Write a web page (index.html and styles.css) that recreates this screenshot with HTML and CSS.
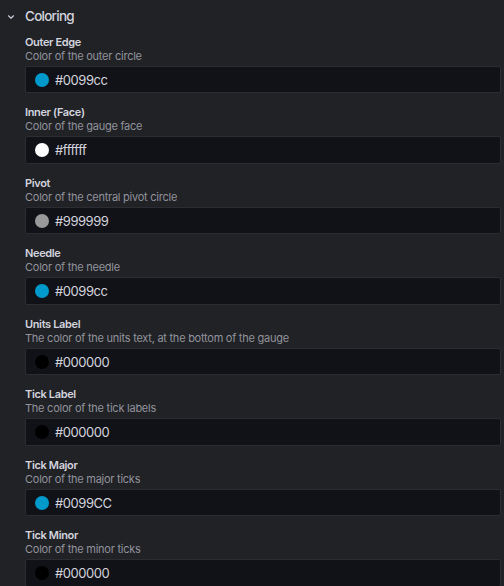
FILE: index.html
```html
<!DOCTYPE html>
<html>
<head>
<meta charset="utf-8">
<link rel="stylesheet" href="styles.css">
</head>
<body>
<div class="section">
  <div class="section-header">
    <svg class="chevron" width="10" height="10" viewBox="0 0 10 10"><path d="M2.5 3.8 L5 6.2 L7.5 3.8" fill="none" stroke="#ccccdc" stroke-width="1.2" stroke-linecap="round" stroke-linejoin="round"/></svg>
    <span class="section-title">Coloring</span>
  </div>
  <div class="fields">
    <div class="field">
      <div class="label">Outer Edge</div>
      <div class="desc">Color of the outer circle</div>
      <div class="input"><span class="swatch" style="background:#0099cc"></span><span class="value">#0099cc</span></div>
    </div>
    <div class="field">
      <div class="label">Inner (Face)</div>
      <div class="desc">Color of the gauge face</div>
      <div class="input"><span class="swatch" style="background:#ffffff"></span><span class="value">#ffffff</span></div>
    </div>
    <div class="field">
      <div class="label">Pivot</div>
      <div class="desc">Color of the central pivot circle</div>
      <div class="input"><span class="swatch" style="background:#999999"></span><span class="value">#999999</span></div>
    </div>
    <div class="field">
      <div class="label">Needle</div>
      <div class="desc">Color of the needle</div>
      <div class="input"><span class="swatch" style="background:#0099cc"></span><span class="value">#0099cc</span></div>
    </div>
    <div class="field">
      <div class="label">Units Label</div>
      <div class="desc">The color of the units text, at the bottom of the gauge</div>
      <div class="input"><span class="swatch" style="background:#000000"></span><span class="value">#000000</span></div>
    </div>
    <div class="field">
      <div class="label">Tick Label</div>
      <div class="desc">The color of the tick labels</div>
      <div class="input"><span class="swatch" style="background:#000000"></span><span class="value">#000000</span></div>
    </div>
    <div class="field">
      <div class="label">Tick Major</div>
      <div class="desc">Color of the major ticks</div>
      <div class="input"><span class="swatch" style="background:#0099CC"></span><span class="value">#0099CC</span></div>
    </div>
    <div class="field">
      <div class="label">Tick Minor</div>
      <div class="desc">Color of the minor ticks</div>
      <div class="input"><span class="swatch" style="background:#000000"></span><span class="value">#000000</span></div>
    </div>
  </div>
</div>
</body>
</html>
```
FILE: styles.css
```css
html, body {
  margin: 0;
  padding: 0;
  background: #202226;
  height: 586px;
  overflow: hidden;
}
body {
  font-family: Inter, "Noto Sans", sans-serif;
  color: #ccccdc;
}
.section {
  padding: 5.6px 3px 0 25px;
}
.section-header {
  display: flex;
  align-items: center;
  height: 20px;
  position: relative;
}
.chevron {
  position: absolute;
  left: -19px;
  top: 6px;
}
.section-title {
  font-size: 13.5px;
  line-height: 20px;
  font-weight: 500;
  letter-spacing: -0.75px;
  color: #d4d4de;
}
.fields {
  padding-top: 9.1px;
  display: flex;
  flex-direction: column;
  gap: 11.9px;
}
.field {
  display: flex;
  flex-direction: column;
}
.label {
  font-size: 11px;
  line-height: 14px;
  font-weight: 600;
  letter-spacing: -0.35px;
  color: #d4d4de;
}
.desc {
  font-size: 11px;
  line-height: 14px;
  letter-spacing: -0.25px;
  color: #92929c;
  margin-bottom: 3.3px;
}
.input {
  height: 27.3px;
  box-sizing: border-box;
  background: #111217;
  border: 1px solid #2c2d33;
  border-radius: 2px;
  display: flex;
  align-items: center;
  padding-left: 9px;
  gap: 6px;
}
.swatch {
  width: 14px;
  height: 14px;
  border-radius: 50%;
  flex: none;
}
.value {
  font-size: 13px;
  letter-spacing: -0.45px;
  color: #d4d4de;
}
```
